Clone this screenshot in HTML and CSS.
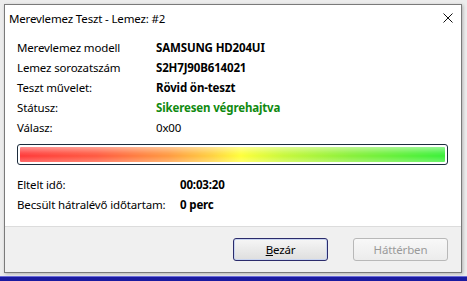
FILE: index.html
```html
<!DOCTYPE html>
<html lang="hu">
<head>
<meta charset="utf-8">
<link rel="stylesheet" href="styles.css">
</head>
<body>
<div class="desk">
  <div class="win">
    <div class="titlebar">
      <span class="title">Merevlemez Teszt - Lemez: #2</span>
      <svg class="close" width="10" height="10" viewBox="0 0 10 10"><path d="M0.5 0.5 L9.5 9.5 M9.5 0.5 L0.5 9.5" stroke="#111" stroke-width="1" fill="none"/></svg>
    </div>
    <div class="body">
      <div class="info">
        <div class="lbl">Merevlemez modell</div><div class="val b">SAMSUNG HD204UI</div>
        <div class="lbl">Lemez sorozatszám</div><div class="val b">S2H7J90B614021</div>
        <div class="lbl">Teszt művelet:</div><div class="val b">Rövid ön-teszt</div>
        <div class="lbl">Státusz:</div><div class="val b ok">Sikeresen végrehajtva</div>
        <div class="lbl">Válasz:</div><div class="val">0x00</div>
      </div>
      <div class="bar"><div class="fill"></div></div>
      <div class="times">
        <div class="lbl">Eltelt idő:</div><div class="val b">00:03:20</div>
        <div class="lbl">Becsült hátralévő időtartam:</div><div class="val b">0 perc</div>
      </div>
    </div>
    <div class="footer">
      <button class="btn primary"><u>B</u>ezár</button>
      <button class="btn" disabled>Háttérben</button>
    </div>
  </div>
  <div class="strip"></div>
</div>
</body>
</html>
```
FILE: styles.css
```css
* { box-sizing: border-box; }
html, body { margin: 0; padding: 0; }
body {
  width: 467px;
  height: 281px;
  overflow: hidden;
  background: #ececec;
  font-family: "Noto Sans", "Segoe UI", sans-serif;
  font-size: 11.5px;
  letter-spacing: -0.15px;
  color: #000;
}
.desk {
  padding: 4px 0 0 4px;
  height: 281px;
  display: flex;
  flex-direction: column;
}
.win {
  width: 458px;
  height: 270px;
  border: 1px solid #7a7a7a;
  background: #fff;
  display: flex;
  flex-direction: column;
  box-shadow: 1px 1px 3px rgba(0,0,0,0.25);
}
.titlebar {
  height: 26px;
  display: flex;
  align-items: center;
  justify-content: space-between;
  padding: 0 8px 0 4px;
}
.close { display: block; }
.body {
  flex: 1;
  padding: 6px 13px 0 12px;
}
.info {
  display: grid;
  grid-template-columns: 139px 1fr;
  grid-auto-rows: 20px;
  align-items: center;
}
.b { font-weight: bold; }
.ok { color: #108a10; }
.bar {
  margin: 7px 0 0 0;
  height: 21px;
  border: 1px solid #1c2c3c;
  border-radius: 3px;
  padding: 2px;
  background: #fff;
}
.fill {
  height: 100%;
  border-radius: 1px;
  background:
    linear-gradient(to bottom, rgba(255,255,255,0.45) 0%, rgba(255,255,255,0.1) 40%, rgba(255,255,255,0) 60%, rgba(255,255,255,0.25) 100%),
    linear-gradient(to right, #ff3a3a 0%, #ff5a40 18%, #ff9a40 35%, #ffd040 45%, #ffff3a 52%, #c8f83a 62%, #88f03a 78%, #3af03a 100%);
}
.times {
  margin-top: 9px;
  display: grid;
  grid-template-columns: 163px 1fr;
  grid-auto-rows: 20px;
  align-items: center;
}
.footer {
  height: 46px;
  background: #f0f0f0;
  border-top: 1px solid #dcdcdc;
  display: flex;
  justify-content: flex-end;
  align-items: center;
  gap: 25px;
  padding: 0 13px 0 0;
}
.btn {
  width: 95px;
  height: 23px;
  font-family: inherit;
  font-size: 11.5px;
  letter-spacing: -0.15px;
  border: 1px solid #a0a0a0;
  border-radius: 3px;
  background: linear-gradient(#f6f6f6, #dedede);
  color: #000;
  padding: 0;
}
.btn.primary {
  border: 1px solid #2b2b6b;
  box-shadow: inset 0 0 0 1px #c8d4f0;
}
.btn[disabled] {
  color: #9a9a9a;
  border-color: #b8b8b8;
  background: linear-gradient(#f8f8f8, #ececec);
}
.strip {
  margin-top: 3px;
  margin-left: -4px;
  height: 5px;
  width: 467px;
  background: #1a1aa0;
  border-top: 1px solid #6a6ad8;
}
```
